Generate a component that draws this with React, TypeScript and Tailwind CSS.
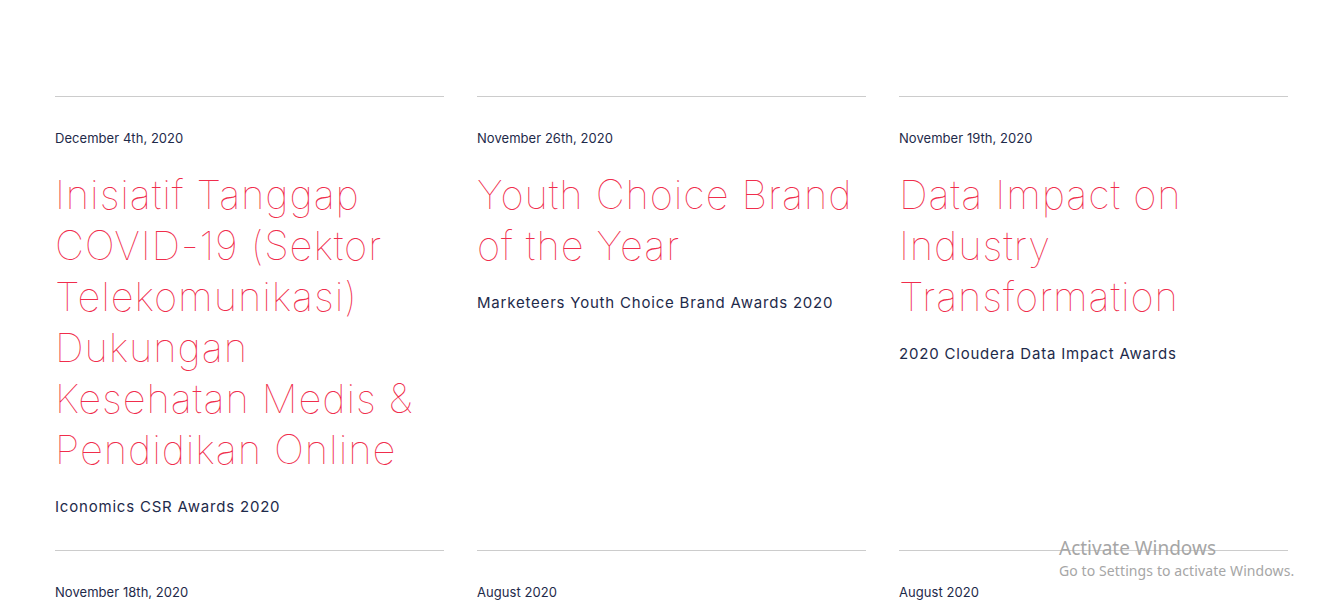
import React from 'react';

type Award = {
  date: string;
  title: string;
  subtitle?: string;
};

const awards: Award[] = [
  {
    date: 'December 4th, 2020',
    title: 'Inisiatif Tanggap COVID-19 (Sektor Telekomunikasi) Dukungan Kesehatan Medis & Pendidikan Online',
    subtitle: 'Iconomics CSR Awards 2020',
  },
  {
    date: 'November 26th, 2020',
    title: 'Youth Choice Brand of the Year',
    subtitle: 'Marketeers Youth Choice Brand Awards 2020',
  },
  {
    date: 'November 19th, 2020',
    title: 'Data Impact on Industry Transformation',
    subtitle: '2020 Cloudera Data Impact Awards',
  },
  { date: 'November 18th, 2020', title: '' },
  { date: 'August 2020', title: '' },
  { date: 'August 2020', title: '' },
];

const AwardCard = ({ item }: { item: Award }) => (
  <div className="border-t border-[#cccccc] pt-[31px] pb-[31px]">
    <p className="text-[13px] leading-5 text-[#1e2a4a] font-['Inter',sans-serif] tracking-[0.05px]">
      {item.date}
    </p>
    {item.title && (
      <h3 className="mt-[21px] text-[40px] leading-[51px] font-thin text-[#f02d4c] font-['Inter',sans-serif] tracking-[0.9px]">
        {item.title}
      </h3>
    )}
    {item.subtitle && (
      <p className="mt-[20px] text-[15px] leading-6 text-[#1e2a4a] font-['Inter',sans-serif] tracking-[0.8px]">
        {item.subtitle}
      </p>
    )}
  </div>
);

export default function App() {
  return (
    <div className="relative min-h-[611px] bg-white overflow-hidden">
      <div className="pl-[55px] pt-[96px]">
        <div className="grid w-[1233px] grid-cols-3 gap-x-[33px]">
          {awards.map((item, i) => (
            <AwardCard key={i} item={item} />
          ))}
        </div>
      </div>

      {/* watermark overlay */}
      <div className="absolute left-[1059px] top-[536px] text-[#a6a6a6] font-['Noto_Sans',sans-serif] pointer-events-none">
        <p className="text-[19px] leading-6">Activate Windows</p>
        <p className="text-[14px] leading-5 mt-px tracking-[0.1px]">Go to Settings to activate Windows.</p>
      </div>
    </div>
  );
}
